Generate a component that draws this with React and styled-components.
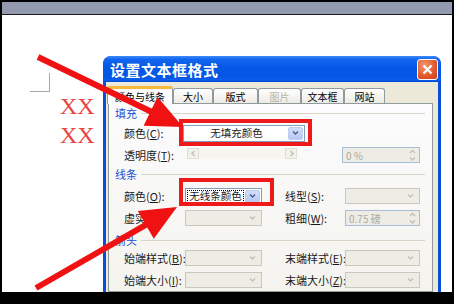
import React from 'react';
import styled, { createGlobalStyle } from 'styled-components';

const GlobalStyle = createGlobalStyle`
  html, body { margin: 0; padding: 0; background: #000; }
  body { font-family: "Noto Sans CJK SC", "DejaVu Sans", sans-serif; }
`;

const Screen = styled.div`
  position: relative;
  width: 454px;
  height: 304px;
  box-sizing: border-box;
  padding: 2px 2px 12px;
  background: #000;
  display: flex;
  flex-direction: column;
  overflow: hidden;
`;

const TopBar = styled.div`
  flex: none;
  height: 12px;
  background: #9399ae;
  border-bottom: 1px solid #1a1a1a;
`;

const Sheet = styled.div`
  flex: 1;
  display: flex;
  background: #fff;
  overflow: hidden;
`;

const PageMargin = styled.div`
  flex: none;
  width: 101px;
  padding-top: 58px;
`;

const CornerMark = styled.div`
  margin-left: 28px;
  width: 20px;
  height: 19px;
  box-sizing: border-box;
  border-right: 1px solid #a8a8a8;
  border-bottom: 1px solid #a8a8a8;
`;

const RedText = styled.div`
  margin-left: 58px;
  font-family: "Liberation Serif", serif;
  font-size: 24px;
  line-height: 29px;
  color: #e84444;
`;

const Dialog = styled.div`
  flex: none;
  margin-top: 41px;
  width: 332px;
  display: flex;
  flex-direction: column;
  background: #0a4fdc;
  border-radius: 8px 8px 0 0;
  padding: 0 3px;
  overflow: hidden;
`;

const TitleBar = styled.div`
  flex: none;
  height: 26px;
  margin: 0 -3px;
  padding: 0 3px 0 7px;
  display: flex;
  align-items: center;
  justify-content: space-between;
  background: linear-gradient(#3d8cf8 0%, #1466f0 12%, #0458e6 45%, #0456e4 80%, #0a5ded 92%, #0248d4 100%);
  color: #fff;
  font-size: 15px;
  font-weight: bold;
  letter-spacing: 0.5px;
`;

const CloseButton = styled.div`
  width: 21px;
  height: 21px;
  box-sizing: border-box;
  border: 1px solid #fff;
  border-radius: 3px;
  background: radial-gradient(circle at 35% 30%, #f39a74, #e2562a 60%, #c8401c);
  display: flex;
  align-items: center;
  justify-content: center;
`;

const Body = styled.div`
  flex: 1;
  background: #ece9d8;
  padding: 4px 5px 0 2px;
  display: flex;
  flex-direction: column;
`;

const TabStrip = styled.div`
  display: flex;
  align-items: flex-end;
  height: 17px;
  margin-left: -1px;
  position: relative;
  z-index: 1;
`;

const Tab = styled.div`
  width: ${(p) => p.$w}px;
  height: ${(p) => (p.$active ? 18 : 15)}px;
  margin-bottom: ${(p) => (p.$active ? -1 : 0)}px;
  box-sizing: border-box;
  border: 1px solid #919b9c;
  border-bottom: none;
  border-top: ${(p) => (p.$active ? '3px solid #f5b93e' : '1px solid #919b9c')};
  border-radius: 3px 3px 0 0;
  background: ${(p) => (p.$active ? '#fcfcfe' : 'linear-gradient(#ffffff, #ecebe5)')};
  display: flex;
  align-items: center;
  justify-content: center;
  font-size: 10px;
  color: ${(p) => (p.$disabled ? '#b8b5a6' : '#000')};
`;

const Panel = styled.div`
  flex: 1;
  border: 1px solid #919b9c;
  background: linear-gradient(#fcfcfe, #f4f3ee);
  padding: 2px 7px 0 6px;
`;

const Section = styled.div`
  height: 14px;
  margin-top: ${(p) => p.$mt || 0}px;
  display: flex;
  align-items: center;
  gap: 4px;
  font-size: 11px;
  color: #2151d2;

  &::after {
    content: '';
    flex: 1;
    height: 1px;
    background: #d6d5c8;
  }
`;

const Row = styled.div`
  display: grid;
  grid-template-columns: 61px 77px 23px 60px 75px;
  align-items: center;
  height: 20px;
  margin-top: ${(p) => p.$mt || 0}px;
  padding-left: 9px;
  font-size: 11px;
  color: #1a1a1a;
  white-space: nowrap;
`;

const Label = styled.span`
  grid-column: ${(p) => p.$col || 1};
`;

const Combo = styled.div`
  grid-column: ${(p) => p.$col || 2} / span ${(p) => p.$span || 1};
  justify-self: start;
  width: ${(p) => p.$w || 77}px;
  margin-left: ${(p) => p.$ml || 0}px;
  height: ${(p) => p.$h || 16}px;
  box-sizing: border-box;
  border: 1px solid ${(p) => (p.$disabled ? '#cac8bb' : '#7f9db9')};
  background: ${(p) => (p.$disabled ? '#eeede5' : '#fff')};
  display: flex;
  align-items: stretch;
  padding: 1px;
`;

const ComboValue = styled.div`
  flex: 1;
  display: flex;
  align-items: center;
  justify-content: center;
  font-size: 10.5px;
  line-height: 1;
  ${(p) => p.$focus && 'outline: 1px dotted #000; outline-offset: -1px; margin-right: 1px;'}
`;

const ArrowButton = styled.div`
  width: 15px;
  box-sizing: border-box;
  border-radius: 2px;
  display: flex;
  align-items: center;
  justify-content: center;
  background: ${(p) => (p.$disabled ? 'transparent' : 'linear-gradient(#d2def9, #b6c8f4)')};
  border: 1px solid ${(p) => (p.$disabled ? 'transparent' : '#bccbf1')};
`;

const Spin = styled.div`
  grid-column: 5;
  justify-self: start;
  width: ${(p) => p.$w || 75}px;
  margin-left: ${(p) => p.$ml || 0}px;
  height: 16px;
  box-sizing: border-box;
  border: 1px solid #a9bcd8;
  background: #eeede5;
  display: flex;
  align-items: center;
  padding-left: 3px;
  font-size: 10px;
  color: #aca899;
`;

const SpinText = styled.span`
  flex: 1;
`;

const SpinArrows = styled.div`
  width: 13px;
  display: flex;
  flex-direction: column;
  align-items: center;
  gap: 1px;
`;

const ScrollBar = styled.div`
  grid-column: 2 / span 3;
  justify-self: start;
  width: 110px;
  margin-left: 2px;
  height: 11px;
  margin-top: -3px;
  display: flex;
  justify-content: space-between;
  background: #f6f5f0;
`;

const ScrollButton = styled.div`
  width: 12px;
  box-sizing: border-box;
  border: 1px solid #e0dfd6;
  background: #f2f1ea;
  display: flex;
  align-items: center;
  justify-content: center;
`;

const Overlay = styled.svg`
  position: absolute;
  left: 0;
  top: 0;
  pointer-events: none;
  z-index: 5;
`;

const Chevron = ({ color = '#4d6185', dir = 'down' }) => {
  const d = {
    down: 'M1 1.5 L3.5 4 L6 1.5',
    up: 'M1 4 L3.5 1.5 L6 4',
    left: 'M4.5 1 L2 3.5 L4.5 6',
    right: 'M2.5 1 L5 3.5 L2.5 6',
  }[dir];
  const h = dir === 'left' || dir === 'right' ? 7 : 5.5;
  return (
    <svg width="7" height={h} viewBox={`0 0 7 ${h}`}>
      <path d={d} fill="none" stroke={color} strokeWidth="1.5" />
    </svg>
  );
};

const DisabledCombo = ({ col = 2, w = 77 }) => (
  <Combo $disabled $col={col} $w={w}>
    <ComboValue />
    <ArrowButton $disabled>
      <Chevron color="#c4c2b5" />
    </ArrowButton>
  </Combo>
);

const SpinBox = ({ value, ml = 0, w = 75 }) => (
  <Spin $ml={ml} $w={w}>
    <SpinText>{value}</SpinText>
    <SpinArrows>
      <Chevron color="#c4c2b5" dir="up" />
      <Chevron color="#c4c2b5" dir="down" />
    </SpinArrows>
  </Spin>
);

const tabs = [
  { name: '颜色与线条', w: 66, active: true },
  { name: '大小', w: 40 },
  { name: '版式', w: 45 },
  { name: '图片', w: 43, disabled: true },
  { name: '文本框', w: 43 },
  { name: '网站', w: 41 },
];

// arrow head triangle for the red annotation arrows
const arrowHead = (x1, y1, tx, ty, len, half) => {
  const dx = tx - x1;
  const dy = ty - y1;
  const l = Math.hypot(dx, dy);
  const ux = dx / l;
  const uy = dy / l;
  const bx = tx - ux * len;
  const by = ty - uy * len;
  const px = -uy * half;
  const py = ux * half;
  return {
    base: [bx + ux * 2, by + uy * 2],
    points: `${tx},${ty} ${bx + px},${by + py} ${bx - px},${by - py}`,
  };
};

const a1 = arrowHead(38, 57, 183, 127, 36, 16);
const a2 = arrowHead(36, 288, 177, 207, 36, 16);

export default function App() {
  return (
    <>
      <GlobalStyle />
      <Screen>
        <TopBar />
        <Sheet>
          <PageMargin>
            <CornerMark />
            <RedText>XX<br />XX</RedText>
          </PageMargin>
          <Dialog>
            <TitleBar>
              <span>设置文本框格式</span>
              <CloseButton>
                <svg width="11" height="11" viewBox="0 0 11 11">
                  <path d="M1.5 1.5 L9.5 9.5 M9.5 1.5 L1.5 9.5" stroke="#fff" strokeWidth="2.2" />
                </svg>
              </CloseButton>
            </TitleBar>
            <Body>
              <TabStrip>
                {tabs.map((t) => (
                  <Tab key={t.name} $w={t.w} $active={t.active} $disabled={t.disabled}>
                    {t.name}
                  </Tab>
                ))}
              </TabStrip>
              <Panel>
                <Section>填充</Section>
                <Row $mt={3}>
                  <Label>颜色(<u>C</u>):</Label>
                  <Combo $span={3} $w={122} $ml={-2} $h={17}>
                    <ComboValue>无填充颜色</ComboValue>
                    <ArrowButton>
                      <Chevron />
                    </ArrowButton>
                  </Combo>
                </Row>
                <Row $mt={2}>
                  <Label>透明度(<u>T</u>):</Label>
                  <ScrollBar>
                    <ScrollButton><Chevron color="#c4c2b5" dir="left" /></ScrollButton>
                    <ScrollButton><Chevron color="#c4c2b5" dir="right" /></ScrollButton>
                  </ScrollBar>
                  <SpinBox value="0 %" ml={-3} w={78} />
                </Row>
                <Section $mt={2}>线条</Section>
                <Row $mt={5}>
                  <Label>颜色(<u>O</u>):</Label>
                  <Combo $h={17}>
                    <ComboValue $focus>无线条颜色</ComboValue>
                    <ArrowButton>
                      <Chevron />
                    </ArrowButton>
                  </Combo>
                  <Label $col={4}>线型(<u>S</u>):</Label>
                  <DisabledCombo col={5} w={75} />
                </Row>
                <Row $mt={2}>
                  <Label>虚实(<u>D</u>):</Label>
                  <DisabledCombo />
                  <Label $col={4}>粗细(<u>W</u>):</Label>
                  <SpinBox value="0.75 磅" />
                </Row>
                <Section $mt={5}>箭头</Section>
                <Row $mt={1}>
                  <Label>始端样式(<u>B</u>):</Label>
                  <DisabledCombo />
                  <Label $col={4}>末端样式(<u>E</u>):</Label>
                  <DisabledCombo col={5} w={75} />
                </Row>
                <Row $mt={2}>
                  <Label>始端大小(<u>I</u>):</Label>
                  <DisabledCombo />
                  <Label $col={4}>末端大小(<u>Z</u>):</Label>
                  <DisabledCombo col={5} w={75} />
                </Row>
              </Panel>
            </Body>
          </Dialog>
        </Sheet>
        <Overlay width="454" height="304" viewBox="0 0 454 304">
          <rect x="181" y="121" width="129" height="23" fill="none" stroke="#ee1a1a" strokeWidth="4" />
          <rect x="181" y="180" width="91" height="24" fill="none" stroke="#ee1a1a" strokeWidth="4" />
          <line x1="38" y1="57" x2={a1.base[0]} y2={a1.base[1]} stroke="#f01212" strokeWidth="6" />
          <polygon points={a1.points} fill="#f01212" />
          <line x1="36" y1="288" x2={a2.base[0]} y2={a2.base[1]} stroke="#f01212" strokeWidth="6" />
          <polygon points={a2.points} fill="#f01212" />
        </Overlay>
      </Screen>
    </>
  );
}
